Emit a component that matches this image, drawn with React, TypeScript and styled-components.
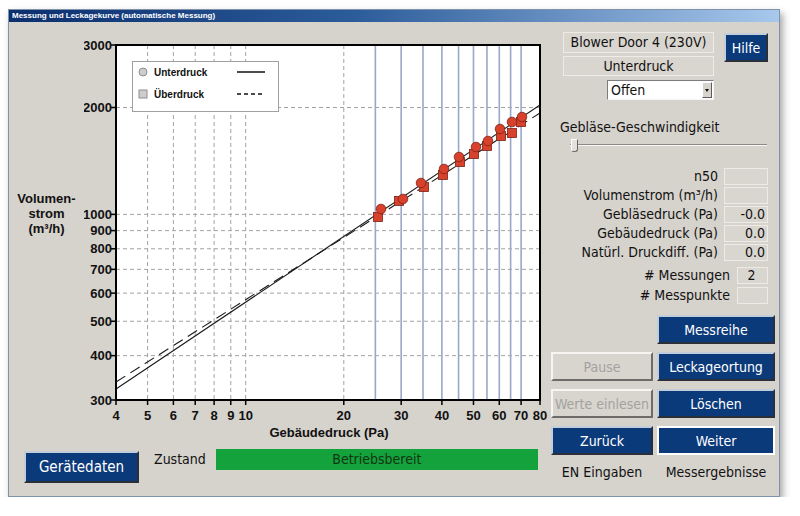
import React from 'react';
import styled, { createGlobalStyle, css } from 'styled-components';

const UI_FONT = `"DejaVu Sans Condensed", "Liberation Sans", Arial, sans-serif`;

const GlobalStyle = createGlobalStyle`
  html, body {
    margin: 0;
    padding: 0;
    background: #ffffff;
  }
  body {
    font-family: ${UI_FONT};
    color: #111;
  }
`;

// ---- window frame ----

const Window = styled.div`
  box-sizing: border-box;
  margin: 9px 0 0 8px;
  width: 772px;
  height: 488px;
  border: 1px solid #7f93ad;
  background: #d6d2cc;
  box-shadow: 3px 4px 7px rgba(60, 60, 60, 0.45);
  display: flex;
  flex-direction: column;
`;

const TitleBar = styled.div`
  height: 12px;
  padding-left: 3px;
  background: linear-gradient(90deg, #0c2f6e 0%, #2c5c9a 45%, #a8c8ec 100%);
  color: #fff;
  font: bold 8px/12px "Liberation Sans", Arial, sans-serif;
  white-space: nowrap;
`;

const Body = styled.div`
  flex: 1;
  display: flex;
`;

// ---- left side: chart + status ----

const LeftPane = styled.div`
  width: 542px;
  padding-top: 14px;
  display: flex;
  flex-direction: column;
`;

const ChartRow = styled.div`
  display: flex;
  height: 404px;
`;

const AxisTitle = styled.div`
  width: 75px;
  padding-top: 155px;
  text-align: center;
  font: bold 13px/15px "Liberation Sans", Arial, sans-serif;
`;

const ChartSvg = styled.svg`
  display: block;
  flex: none;
  text {
    font-family: "Liberation Sans", Arial, sans-serif;
    font-weight: bold;
    fill: #111;
  }
`;

const BottomRow = styled.div`
  display: flex;
  align-items: flex-start;
  margin-top: 9px;
  padding-left: 15px;
`;

const StatusLabel = styled.div`
  margin-left: 15px;
  font-size: 14px;
  line-height: 21px;
`;

const StatusBar = styled.div`
  margin-left: 10px;
  width: 322px;
  height: 21px;
  background: #13a23c;
  color: #123512;
  text-align: center;
  font-size: 14px;
  line-height: 21px;
`;

// ---- buttons ----

const ActionButton = styled.div<{ $disabled?: boolean; $focused?: boolean; $col?: number }>`
  box-sizing: border-box;
  display: flex;
  align-items: center;
  justify-content: center;
  border: 2px solid;
  border-color: #c3ccd9 #2a2f3a #2a2f3a #c3ccd9;
  background: #0b3a7b;
  color: #ffffff;
  font-size: 14px;
  white-space: nowrap;
  ${(p) => p.$col && css`grid-column: ${p.$col};`}
  ${(p) =>
    p.$disabled &&
    css`
      border-color: #f6f5f2 #6e6c68 #6e6c68 #f6f5f2;
      background: #d8d4ce;
      color: #a4a29e;
    `}
  ${(p) =>
    p.$focused &&
    css`
      border-color: #ffffff;
    `}
`;

const DeviceButton = styled(ActionButton)`
  width: 115px;
  height: 32px;
  margin-top: 2px;
  font-size: 15px;
`;

const HelpButton = styled(ActionButton)`
  width: 44px;
  height: 29px;
  margin-top: 1px;
`;

// ---- right side ----

const RightPane = styled.div`
  flex: 1;
  padding-right: 4px;
  display: flex;
  flex-direction: column;
`;

const TopRow = styled.div`
  display: flex;
  align-items: flex-start;
  gap: 10px;
  margin-top: 10px;
  padding-left: 12px;
`;

const DeviceCol = styled.div`
  width: 151px;
  display: flex;
  flex-direction: column;
`;

const InfoBox = styled.div<{ $h: number; $mt?: number }>`
  box-sizing: border-box;
  height: ${(p) => p.$h}px;
  margin-top: ${(p) => p.$mt ?? 0}px;
  border: 1px solid #eeebe6;
  background: #d9d5cf;
  text-align: center;
  font-size: 14px;
  line-height: ${(p) => p.$h - 2}px;
  white-space: nowrap;
`;

const SelectBox = styled.div`
  align-self: flex-end;
  box-sizing: border-box;
  width: 107px;
  height: 20px;
  margin-top: 4px;
  border: 1px solid;
  border-color: #7c7c7c #f4f4f4 #f4f4f4 #7c7c7c;
  background: #ffffff;
  display: flex;
  align-items: center;
`;

const SelectText = styled.div`
  flex: 1;
  padding-left: 3px;
  font-size: 14px;
  line-height: 18px;
`;

const SelectArrow = styled.div`
  box-sizing: border-box;
  width: 10px;
  height: 16px;
  margin-right: 1px;
  border: 1px solid;
  border-color: #ffffff #5c5c5c #5c5c5c #ffffff;
  background: #d6d2cc;
  display: flex;
  align-items: center;
  justify-content: center;
  &::after {
    content: '';
    border-left: 2px solid transparent;
    border-right: 2px solid transparent;
    border-top: 3px solid #111;
  }
`;

const SpeedLabel = styled.div`
  margin-top: 19px;
  padding-left: 9px;
  font-size: 14px;
  line-height: 16px;
`;

const Slider = styled.div`
  position: relative;
  margin: 3px 0 0 19px;
  width: 197px;
  height: 14px;
`;

const SliderGroove = styled.div`
  margin-top: 6px;
  height: 0;
  border-top: 1px solid #8c8a86;
  border-bottom: 1px solid #f8f7f4;
`;

const SliderThumb = styled.div`
  position: absolute;
  left: 1px;
  top: 1px;
  box-sizing: border-box;
  width: 7px;
  height: 13px;
  border: 1px solid;
  border-color: #ffffff #6a6864 #6a6864 #ffffff;
  border-radius: 1px 1px 3px 3px;
  background: #e4e1dc;
`;

const ReadoutGrid = styled.div<{ $valueWidth: number; $gap: number; $rowGap: number; $mt: number }>`
  display: grid;
  grid-template-columns: 1fr ${(p) => p.$valueWidth}px;
  column-gap: ${(p) => p.$gap}px;
  row-gap: ${(p) => p.$rowGap}px;
  grid-auto-rows: 17px;
  margin-top: ${(p) => p.$mt}px;
  padding-right: 7px;
`;

const ReadoutLabel = styled.div`
  text-align: right;
  font-size: 14px;
  line-height: 17px;
  white-space: nowrap;
`;

const ReadoutValue = styled.div<{ $center?: boolean }>`
  box-sizing: border-box;
  border: 1px solid #eeebe6;
  background: #d9d5cf;
  padding-right: 2px;
  text-align: ${(p) => (p.$center ? 'center' : 'right')};
  font-size: 14px;
  line-height: 15px;
`;

const ButtonGrid = styled.div`
  display: grid;
  grid-template-columns: 102px 118px;
  column-gap: 4px;
  row-gap: 8px;
  grid-auto-rows: 29px;
  margin-top: 11px;
`;

const CaptionRow = styled.div`
  display: grid;
  grid-template-columns: 102px 118px;
  column-gap: 4px;
  margin-top: 9px;
`;

const Caption = styled.div`
  text-align: center;
  font-size: 14px;
  line-height: 17px;
  white-space: nowrap;
`;

// ---- chart ----

const LOGX = Math.log10(20);
const px = (p: number) => 32 + (424 * Math.log10(p / 4)) / LOGX;
const py = (v: number) => 364 - 355 * Math.log10(v / 300);

const X_TICKS = [4, 5, 6, 7, 8, 9, 10, 20, 30, 40, 50, 60, 70, 80];
const X_GRID = [5, 6, 7, 8, 9, 10, 20];
const X_BLUE = [25, 30, 35, 40, 45, 50, 55, 60, 65, 70];
const Y_TICKS = [300, 400, 500, 600, 700, 800, 900, 1000, 2000, 3000];
const Y_GRID = [400, 500, 600, 700, 800, 900, 1000, 2000];

// measured points (Unterdruck = circles, Überdruck = squares)
const CIRCLES: [number, number][] = [
  [297, 173], [319, 163], [337, 147], [360, 133], [375, 121],
  [392, 111], [404, 105], [416, 93], [428, 86], [438, 81],
];
const SQUARES: [number, number][] = [
  [294, 181], [315, 165], [340, 151], [359, 139], [376, 126],
  [390, 118], [403, 110], [417, 100], [428, 97], [437, 86],
];

const LeakChart = () => (
  <ChartSvg width={464} height={404} viewBox="0 0 464 404">
    <rect x={32} y={9} width={424} height={355} fill="#ffffff" />
    {X_GRID.map((p) => (
      <line key={`gx${p}`} x1={px(p)} x2={px(p)} y1={9} y2={364} stroke="#a3a3a3" strokeDasharray="4 3" />
    ))}
    {Y_GRID.map((v) => (
      <line key={`gy${v}`} x1={32} x2={456} y1={py(v)} y2={py(v)} stroke="#a3a3a3" strokeDasharray="4 3" />
    ))}
    {X_BLUE.map((p) => (
      <line key={`b${p}`} x1={px(p)} x2={px(p)} y1={9} y2={364} stroke="#98a8c6" strokeWidth={1.6} />
    ))}

    <line x1={32} y1={353} x2={456} y2={69} stroke="#1a1a1a" strokeWidth={1.1} />
    <line x1={32} y1={346} x2={456} y2={77} stroke="#1a1a1a" strokeWidth={1.1} strokeDasharray="11 6" />

    {SQUARES.map(([x, y], i) => (
      <rect key={`s${i}`} x={x - 4.5} y={y - 4.5} width={9} height={9} fill="#d8412c" stroke="#7a2214" strokeWidth={0.8} />
    ))}
    {CIRCLES.map(([x, y], i) => (
      <circle key={`c${i}`} cx={x} cy={y} r={4.8} fill="#d8412c" stroke="#7a2214" strokeWidth={0.8} />
    ))}

    <g>
      <rect x={48.5} y={25.5} width={146} height={50} fill="#ffffff" stroke="#a0a0a0" />
      <circle cx={59} cy={36} r={4} fill="#cdcdcd" stroke="#8f8f8f" />
      <text x={70} y={40} fontSize={10}>Unterdruck</text>
      <line x1={153} x2={181} y1={36} y2={36} stroke="#111" strokeWidth={1.5} />
      <rect x={55} y={54} width={8} height={8} fill="#cdcdcd" stroke="#8f8f8f" />
      <text x={70} y={62} fontSize={10}>Überdruck</text>
      <line x1={153} x2={181} y1={58} y2={58} stroke="#111" strokeWidth={1.5} strokeDasharray="4 3" />
    </g>

    <rect x={32} y={9} width={424} height={355} fill="none" stroke="#000" strokeWidth={2} />

    {Y_TICKS.map((v) => (
      <g key={`yt${v}`}>
        <line x1={27} x2={32} y1={py(v)} y2={py(v)} stroke="#000" strokeWidth={1.5} />
        <text x={28} y={py(v) + 4.7} fontSize={13} textAnchor="end">{v}</text>
      </g>
    ))}
    {X_TICKS.map((p) => (
      <g key={`xt${p}`}>
        <line x1={px(p)} x2={px(p)} y1={364} y2={369} stroke="#000" strokeWidth={1.5} />
        <text x={px(p)} y={384} fontSize={13} textAnchor="middle">{p}</text>
      </g>
    ))}
    <text x={245} y={401} fontSize={13} textAnchor="middle">Gebäudedruck (Pa)</text>
  </ChartSvg>
);

const READOUTS: { label: string; value: string }[] = [
  { label: 'n50', value: '' },
  { label: 'Volumenstrom (m³/h)', value: '' },
  { label: 'Gebläsedruck (Pa)', value: '-0.0' },
  { label: 'Gebäudedruck (Pa)', value: '0.0' },
  { label: 'Natürl. Druckdiff. (Pa)', value: '0.0' },
];

const App: React.FC = () => (
  <>
    <GlobalStyle />
    <Window>
      <TitleBar>Messung und Leckagekurve (automatische Messung)</TitleBar>
      <Body>
        <LeftPane>
          <ChartRow>
            <AxisTitle>
              Volumen-
              <br />
              strom
              <br />
              (m³/h)
            </AxisTitle>
            <LeakChart />
          </ChartRow>
          <BottomRow>
            <DeviceButton>Gerätedaten</DeviceButton>
            <StatusLabel>Zustand</StatusLabel>
            <StatusBar>Betriebsbereit</StatusBar>
          </BottomRow>
        </LeftPane>

        <RightPane>
          <TopRow>
            <DeviceCol>
              <InfoBox $h={21}>Blower Door 4 (230V)</InfoBox>
              <InfoBox $h={20} $mt={3}>Unterdruck</InfoBox>
              <SelectBox>
                <SelectText>Offen</SelectText>
                <SelectArrow />
              </SelectBox>
            </DeviceCol>
            <HelpButton>Hilfe</HelpButton>
          </TopRow>

          <SpeedLabel>Gebläse-Geschwindigkeit</SpeedLabel>
          <Slider>
            <SliderGroove />
            <SliderThumb />
          </Slider>

          <ReadoutGrid $valueWidth={44} $gap={6} $rowGap={2} $mt={16}>
            {READOUTS.map((r) => (
              <React.Fragment key={r.label}>
                <ReadoutLabel>{r.label}</ReadoutLabel>
                <ReadoutValue>{r.value}</ReadoutValue>
              </React.Fragment>
            ))}
          </ReadoutGrid>

          <ReadoutGrid $valueWidth={31} $gap={7} $rowGap={3} $mt={6}>
            <ReadoutLabel># Messungen</ReadoutLabel>
            <ReadoutValue $center>2</ReadoutValue>
            <ReadoutLabel># Messpunkte</ReadoutLabel>
            <ReadoutValue $center />
          </ReadoutGrid>

          <ButtonGrid>
            <ActionButton $col={2}>Messreihe</ActionButton>
            <ActionButton $disabled>Pause</ActionButton>
            <ActionButton>Leckageortung</ActionButton>
            <ActionButton $disabled>Werte einlesen</ActionButton>
            <ActionButton>Löschen</ActionButton>
            <ActionButton>Zurück</ActionButton>
            <ActionButton $focused>Weiter</ActionButton>
          </ButtonGrid>
          <CaptionRow>
            <Caption>EN Eingaben</Caption>
            <Caption>Messergebnisse</Caption>
          </CaptionRow>
        </RightPane>
      </Body>
    </Window>
  </>
);

export default App;
